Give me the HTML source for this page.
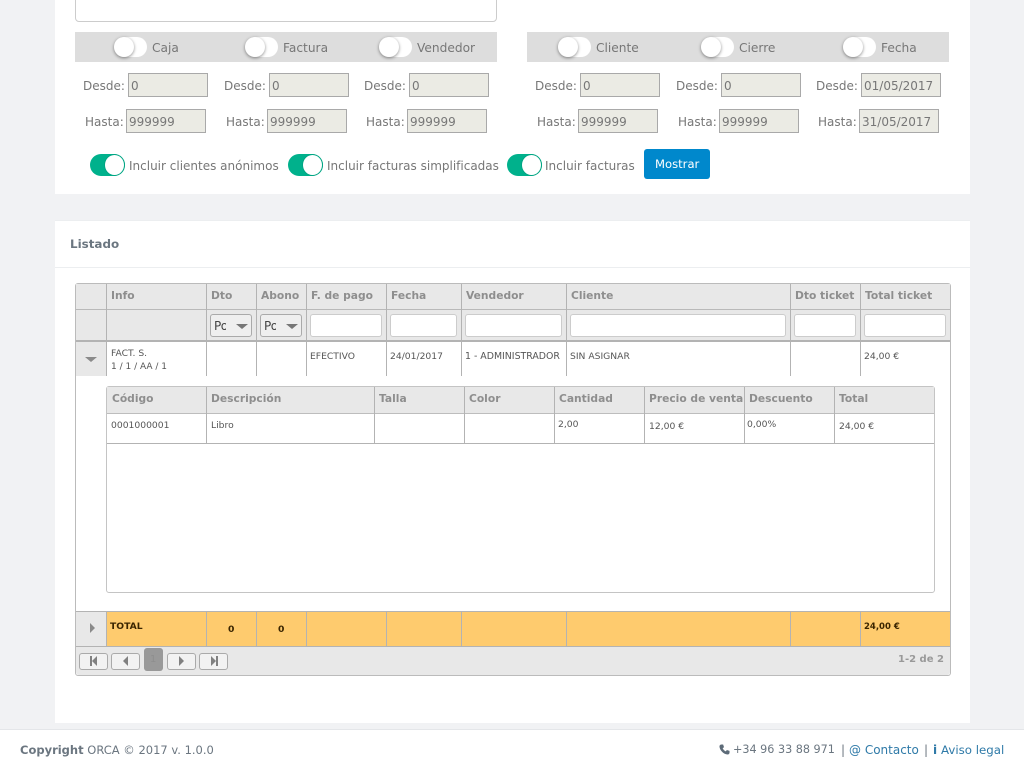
<!DOCTYPE html>
<html lang="es"><head><meta charset="utf-8"><title>Listado</title>
<style>
html,body{margin:0;padding:0;width:1024px;height:768px;overflow:hidden;background:#f1f2f4;font-family:"DejaVu Sans","Liberation Sans",sans-serif;color:#777}
div,span.a{position:absolute;box-sizing:border-box}
.t{position:absolute;white-space:nowrap;line-height:20px;font-size:12px;color:#777}
.tg{width:33px;height:20px;border-radius:10px;background:#fff}
.tg:after{content:"";position:absolute;left:0;top:0;width:20px;height:20px;border-radius:50%;background:#fff;box-shadow:0 1px 3px rgba(0,0,0,.45)}
.on{width:35px;height:22px;border-radius:11px;background:#00b18c}
.on:after{content:"";position:absolute;right:0;top:0;width:21px;height:22px;border-radius:50%;background:#fff;border:1px solid #00a583;box-sizing:border-box}
.in{height:24px;width:80px;background:#ebebe4;border:1px solid #a9a9a9;font-size:12px;line-height:24px;padding-left:2px;color:#777;white-space:nowrap}
.h{font-weight:bold;font-size:10.7px;color:#8e8e8e}
.c{font-size:9.2px;color:#555}
.v{background:#b3b3b3;width:1px}
.f{background:#fff;border:1px solid #ccc;border-radius:3px;height:23px;top:314px}
.pb{top:653px;height:17px;background:#f2f2f2;border:1px solid #aaa;border-radius:3px}
.ar{position:absolute;width:0;height:0}
</style></head><body>

<div style="left:55px;top:0;width:915px;height:194px;background:#fff"></div>
<div style="left:75px;top:-10px;width:422px;height:32px;background:#fff;border:1px solid #ccc;border-radius:4px"></div>

<div style="left:75px;top:32px;width:422px;height:30px;background:#ddd"></div>
<div style="left:527px;top:32px;width:422px;height:30px;background:#ddd"></div>

<div class="tg" style="left:114px;top:37px"></div><span class="t" style="left:152px;top:38px;font-size:12.2px">Caja</span>
<div class="tg" style="left:245px;top:37px"></div><span class="t" style="left:283px;top:38px;font-size:12.2px">Factura</span>
<div class="tg" style="left:379px;top:37px"></div><span class="t" style="left:417px;top:38px;font-size:12.2px">Vendedor</span>
<div class="tg" style="left:558px;top:37px"></div><span class="t" style="left:596px;top:38px;font-size:12.2px">Cliente</span>
<div class="tg" style="left:701px;top:37px"></div><span class="t" style="left:739px;top:38px;font-size:12.2px">Cierre</span>
<div class="tg" style="left:843px;top:37px"></div><span class="t" style="left:881px;top:38px;font-size:12.2px">Fecha</span>

<span class="t" style="left:83px;top:76px">Desde:</span><div class="in" style="left:128px;top:73px">0</div>
<span class="t" style="left:224px;top:76px">Desde:</span><div class="in" style="left:269px;top:73px">0</div>
<span class="t" style="left:364px;top:76px">Desde:</span><div class="in" style="left:409px;top:73px">0</div>
<span class="t" style="left:535px;top:76px">Desde:</span><div class="in" style="left:580px;top:73px">0</div>
<span class="t" style="left:676px;top:76px">Desde:</span><div class="in" style="left:721px;top:73px">0</div>
<span class="t" style="left:816px;top:76px">Desde:</span><div class="in" style="left:861px;top:73px">01/05/2017</div>

<span class="t" style="left:85px;top:112px">Hasta:</span><div class="in" style="left:126px;top:109px">999999</div>
<span class="t" style="left:226px;top:112px">Hasta:</span><div class="in" style="left:267px;top:109px">999999</div>
<span class="t" style="left:366px;top:112px">Hasta:</span><div class="in" style="left:407px;top:109px">999999</div>
<span class="t" style="left:537px;top:112px">Hasta:</span><div class="in" style="left:578px;top:109px">999999</div>
<span class="t" style="left:678px;top:112px">Hasta:</span><div class="in" style="left:719px;top:109px">999999</div>
<span class="t" style="left:818px;top:112px">Hasta:</span><div class="in" style="left:859px;top:109px">31/05/2017</div>

<div class="on" style="left:90px;top:154px"></div><span class="t" style="left:129px;top:156px">Incluir clientes anónimos</span>
<div class="on" style="left:288px;top:154px"></div><span class="t" style="left:327px;top:156px">Incluir facturas simplificadas</span>
<div class="on" style="left:507px;top:154px"></div><span class="t" style="left:545px;top:156px">Incluir facturas</span>
<div style="left:644px;top:149px;width:66px;height:30px;background:#0088cc;border-radius:3px"></div>
<span class="t" style="left:655px;top:154px;color:#fff;font-size:11.6px">Mostrar</span>

<div style="left:55px;top:220px;width:915px;height:503px;background:#fff;border-top:1px solid #eceef0"></div>
<div style="left:55px;top:267px;width:915px;height:1px;background:#eceef0"></div>
<span class="t" style="left:70px;top:234px;font-size:11.9px;font-weight:bold;color:#6b7680">Listado</span>

<!-- grid -->
<div style="left:75px;top:283px;width:876px;height:393px;background:#fff;border:1px solid #bbb;border-radius:3px"></div>
<div style="left:76px;top:284px;width:874px;height:56px;background:#e8e8e8"></div>
<div style="left:76px;top:309px;width:874px;height:1px;background:#b9b9b9"></div>
<div style="left:76px;top:340px;width:874px;height:2px;background:#b3b3b3"></div>
<div style="left:76px;top:342px;width:30px;height:34px;background:#e8e8e8"></div>

<div class="v" style="left:106px;top:284px;height:92px"></div>
<div class="v" style="left:206px;top:284px;height:92px"></div>
<div class="v" style="left:256px;top:284px;height:92px"></div>
<div class="v" style="left:306px;top:284px;height:92px"></div>
<div class="v" style="left:386px;top:284px;height:92px"></div>
<div class="v" style="left:461px;top:284px;height:92px"></div>
<div class="v" style="left:566px;top:284px;height:92px"></div>
<div class="v" style="left:790px;top:284px;height:92px"></div>
<div class="v" style="left:860px;top:284px;height:92px"></div>

<span class="t h" style="left:111px;top:286px">Info</span>
<span class="t h" style="left:211px;top:286px">Dto</span>
<span class="t h" style="left:261px;top:286px">Abono</span>
<span class="t h" style="left:311px;top:286px">F. de pago</span>
<span class="t h" style="left:391px;top:286px">Fecha</span>
<span class="t h" style="left:466px;top:286px">Vendedor</span>
<span class="t h" style="left:571px;top:286px">Cliente</span>
<span class="t h" style="left:795px;top:286px">Dto ticket</span>
<span class="t h" style="left:865px;top:286px">Total ticket</span>

<div class="f" style="left:210px;width:42px;background:#efefef;border-color:#aaa"></div>
<span class="t" style="left:214px;top:316px;color:#444;width:12px;overflow:hidden">Po</span>
<div class="ar" style="left:236px;top:324px;border-left:6px solid transparent;border-right:6px solid transparent;border-top:5px solid #777"></div>
<div class="f" style="left:260px;width:42px;background:#efefef;border-color:#aaa"></div>
<span class="t" style="left:264px;top:316px;color:#444;width:12px;overflow:hidden">Po</span>
<div class="ar" style="left:286px;top:324px;border-left:6px solid transparent;border-right:6px solid transparent;border-top:5px solid #777"></div>
<div class="f" style="left:310px;width:72px"></div>
<div class="f" style="left:390px;width:67px"></div>
<div class="f" style="left:465px;width:97px"></div>
<div class="f" style="left:570px;width:216px"></div>
<div class="f" style="left:794px;width:62px"></div>
<div class="f" style="left:864px;width:82px"></div>

<div class="ar" style="left:85px;top:357px;border-left:6px solid transparent;border-right:6px solid transparent;border-top:5px solid #8a8a8a"></div>
<span class="t c" style="left:111px;top:344px">FACT. S.</span>
<span class="t c" style="left:111px;top:357px;font-size:9px">1 / 1 / AA / 1</span>
<span class="t c" style="left:310px;top:347px">EFECTIVO</span>
<span class="t c" style="left:390px;top:347px">24/01/2017</span>
<span class="t c" style="left:465px;top:347px;font-size:9.4px">1 - ADMINISTRADOR</span>
<span class="t c" style="left:570px;top:347px">SIN ASIGNAR</span>
<span class="t c" style="left:864px;top:347px">24,00 €</span>

<!-- subgrid -->
<div style="left:106px;top:386px;width:829px;height:207px;background:#fff;border:1px solid #c4c4c4;border-radius:3px"></div>
<div style="left:107px;top:387px;width:827px;height:26px;background:#e8e8e8"></div>
<div style="left:107px;top:413px;width:827px;height:1px;background:#bdbdbd"></div>
<div style="left:107px;top:443px;width:827px;height:1px;background:#b3b3b3"></div>
<div class="v" style="left:206px;top:387px;height:56px"></div>
<div class="v" style="left:374px;top:387px;height:56px"></div>
<div class="v" style="left:464px;top:387px;height:56px"></div>
<div class="v" style="left:554px;top:387px;height:56px"></div>
<div class="v" style="left:644px;top:387px;height:56px"></div>
<div class="v" style="left:744px;top:387px;height:56px"></div>
<div class="v" style="left:834px;top:387px;height:56px"></div>
<span class="t h" style="left:112px;top:389px">Código</span>
<span class="t h" style="left:211px;top:389px">Descripción</span>
<span class="t h" style="left:379px;top:389px">Talla</span>
<span class="t h" style="left:469px;top:389px">Color</span>
<span class="t h" style="left:559px;top:389px">Cantidad</span>
<span class="t h" style="left:649px;top:389px">Precio de venta</span>
<span class="t h" style="left:749px;top:389px">Descuento</span>
<span class="t h" style="left:839px;top:389px">Total</span>
<span class="t c" style="left:111px;top:416px">0001000001</span>
<span class="t c" style="left:211px;top:416px">Libro</span>
<span class="t c" style="left:558px;top:415px">2,00</span>
<span class="t c" style="left:649px;top:417px">12,00 €</span>
<span class="t c" style="left:747px;top:415px">0,00%</span>
<span class="t c" style="left:839px;top:417px">24,00 €</span>

<!-- totals -->
<div style="left:76px;top:611px;width:874px;height:36px;background:#fecb6e;border-top:1px solid #b3b3b3;border-bottom:1px solid #b3b3b3"></div>
<div style="left:76px;top:612px;width:30px;height:34px;background:#e8e8e8"></div>
<div class="v" style="left:106px;top:612px;height:34px"></div>
<div class="v" style="left:206px;top:612px;height:34px"></div>
<div class="v" style="left:256px;top:612px;height:34px"></div>
<div class="v" style="left:306px;top:612px;height:34px"></div>
<div class="v" style="left:386px;top:612px;height:34px"></div>
<div class="v" style="left:461px;top:612px;height:34px"></div>
<div class="v" style="left:566px;top:612px;height:34px"></div>
<div class="v" style="left:790px;top:612px;height:34px"></div>
<div class="v" style="left:860px;top:612px;height:34px"></div>
<div class="ar" style="left:90px;top:623px;border-top:5px solid transparent;border-bottom:5px solid transparent;border-left:5px solid #8a8a8a"></div>
<span class="t c" style="left:110px;top:617px;font-weight:bold;color:#3a2500">TOTAL</span>
<span class="t c" style="left:228px;top:620px;font-weight:bold;color:#3a2500">0</span>
<span class="t c" style="left:278px;top:620px;font-weight:bold;color:#3a2500">0</span>
<span class="t c" style="left:864px;top:617px;font-weight:bold;font-size:8.5px;color:#3a2500">24,00 €</span>

<!-- pager -->
<div style="left:76px;top:647px;width:874px;height:28px;background:#e8e8e8;border-radius:0 0 3px 3px"></div>
<div class="pb" style="left:79px;width:29px"></div>
<div style="left:90px;top:656px;width:2px;height:10px;background:#808080"></div>
<div class="ar" style="left:92px;top:656px;border-top:5px solid transparent;border-bottom:5px solid transparent;border-right:5px solid #808080"></div>
<div class="pb" style="left:111px;width:29px"></div>
<div class="ar" style="left:123px;top:656px;border-top:5px solid transparent;border-bottom:5px solid transparent;border-right:5px solid #808080"></div>
<div style="left:144px;top:648px;width:19px;height:23px;background:#999;border-radius:3px"></div>
<span class="t" style="left:150px;top:650px;font-size:10px;color:#8e8e8e">1</span>
<div class="pb" style="left:167px;width:29px"></div>
<div class="ar" style="left:179px;top:656px;border-top:5px solid transparent;border-bottom:5px solid transparent;border-left:5px solid #808080"></div>
<div class="pb" style="left:199px;width:29px"></div>
<div class="ar" style="left:211px;top:656px;border-top:5px solid transparent;border-bottom:5px solid transparent;border-left:5px solid #808080"></div>
<div style="left:216px;top:656px;width:2px;height:10px;background:#808080"></div>
<span class="t" style="left:898px;top:650px;font-size:10px;font-weight:bold;color:#999">1-2 de 2</span>

<!-- footer -->
<div style="left:0;top:729px;width:1024px;height:39px;background:#fff;border-top:1px solid #e4e6e9"></div>
<span class="t" style="left:20px;top:740px;font-size:11.5px;color:#6b7680"><b>Copyright</b> ORCA © 2017 v. 1.0.0</span>
<svg style="position:absolute;left:719px;top:744px" width="11" height="11" viewBox="0 0 24 24"><path d="M5 1l4 0 2 6-3 2c1 3 4 6 7 7l2-3 6 2 0 4c0 2-2 4-4 4C10 23 1 13 1 5c0-2 2-4 4-4z" fill="#5d6b78"/></svg>
<span class="t" style="left:733px;top:740px;font-size:11.2px;color:#6b7680">+34 96 33 88 971</span>
<span class="t" style="left:841px;top:740px;color:#6b7680">|</span>
<span class="t" style="left:849px;top:740px;color:#2f7aa8">@ Contacto</span>
<span class="t" style="left:924px;top:740px;color:#6b7680">|</span>
<b class="t" style="left:933px;top:740px;color:#2f7aa8">i</b>
<span class="t" style="left:941px;top:740px;font-size:11.8px;color:#2f7aa8">Aviso legal</span>
</body></html>
